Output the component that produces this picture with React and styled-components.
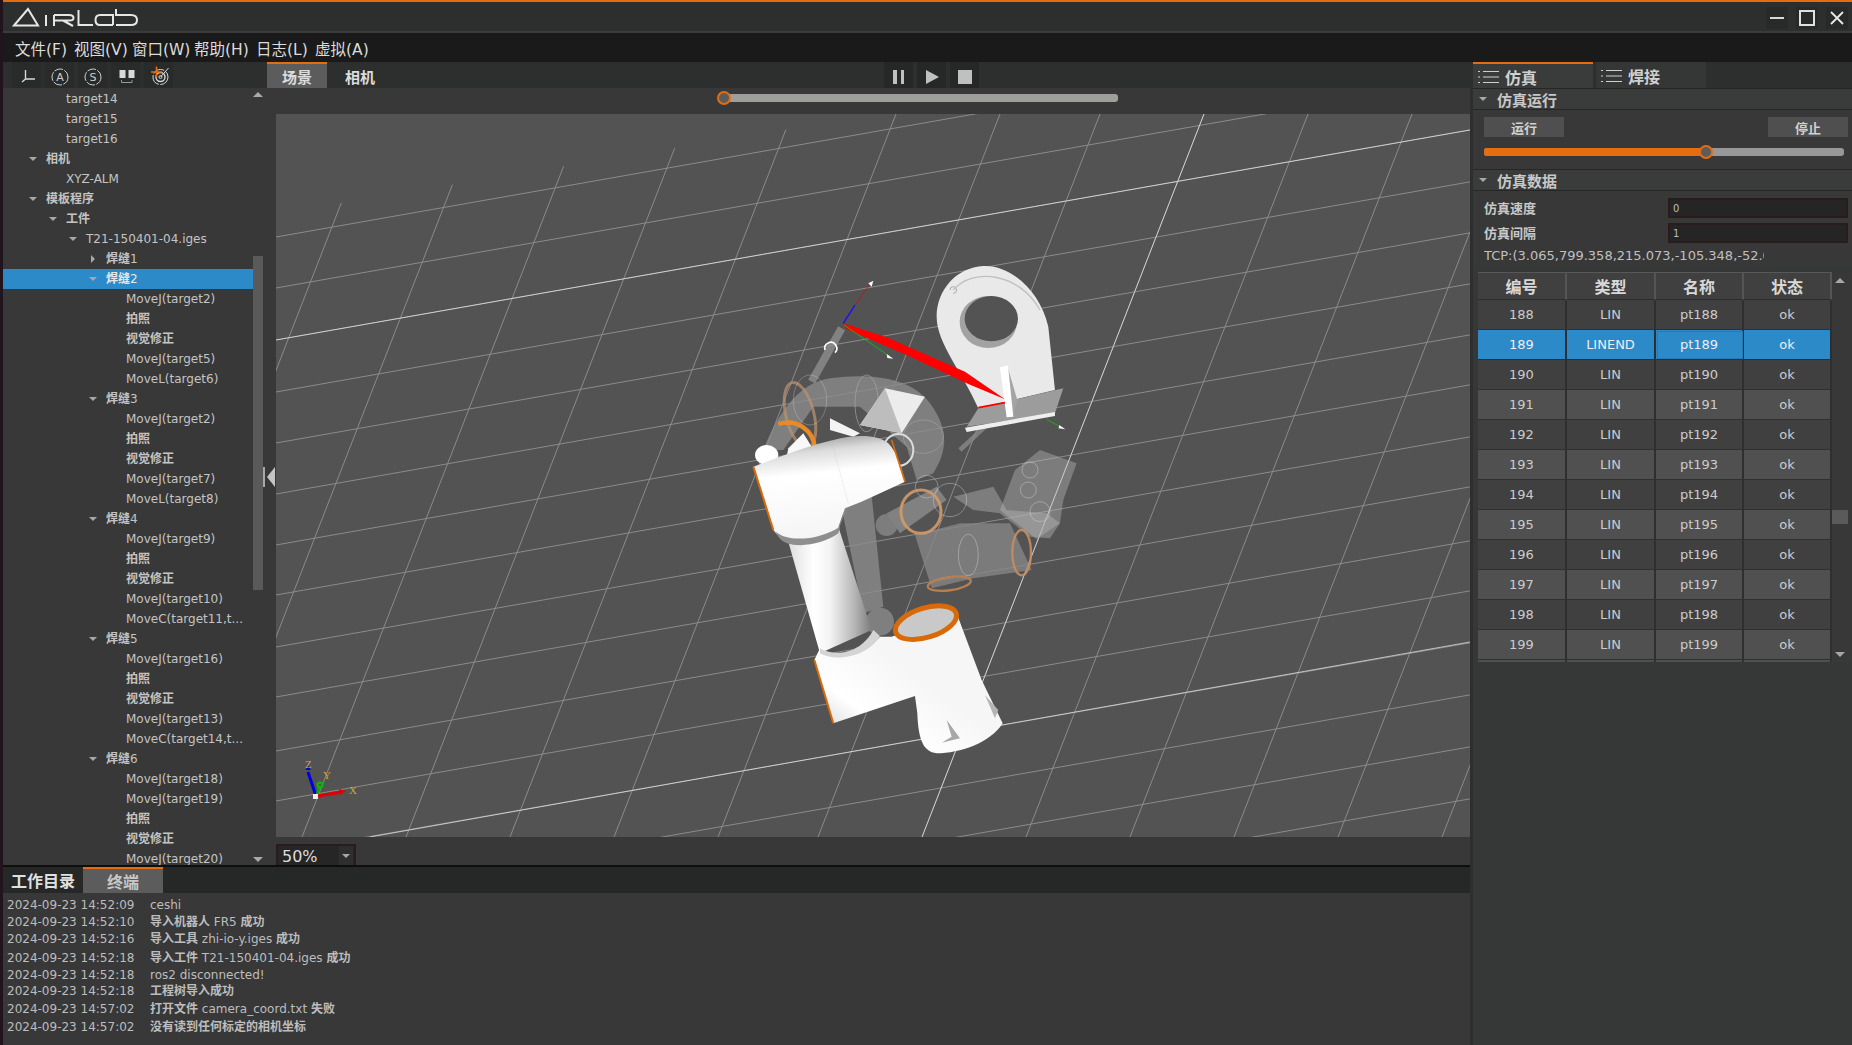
import React from 'react';
import styled, { createGlobalStyle } from 'styled-components';

const FONT = `"DejaVu Sans", "Noto Sans CJK SC", sans-serif`;

const Global = createGlobalStyle`
  html, body { margin: 0; height: 100%; overflow: hidden; background: #21141c; }
  body { font-family: ${FONT}; color: #c8c8c8; }
  * { box-sizing: border-box; }
`;

const App_ = styled.div`
  width: 1849px;
  height: 1045px;
  margin-left: 3px;
  display: flex;
  flex-direction: column;
  background: #383838;
  overflow: hidden;
`;

const TitleBar = styled.div`
  height: 33px;
  flex: none;
  border-top: 2px solid #e36d0f;
  border-bottom: 2px solid #3a3b3b;
  background: #2d2f2f;
  display: flex;
  align-items: center;
  justify-content: space-between;
`;

const WinButtons = styled.div`
  display: flex;
  gap: 8px;
  padding-right: 4px;
  margin-top: 3px;
`;

const WinButton = styled.div`
  width: 22px;
  height: 22px;
  background: #282a2a;
  display: flex;
  align-items: center;
  justify-content: center;
`;

const MenuBar = styled.div`
  height: 29px;
  flex: none;
  background: #1a1a1a;
  display: flex;
  align-items: center;
  padding-left: 12px;
  font-size: 15.5px;
  color: #dcdcdc;
`;

const MenuItem = styled.div`
  width: ${p => p.$w}px;
  white-space: nowrap;
`;

const Workspace = styled.div`
  flex: 1;
  display: flex;
  min-height: 0;
`;

const LeftArea = styled.div`
  flex: 1;
  display: flex;
  flex-direction: column;
  min-width: 0;
`;

const Toolbar = styled.div`
  height: 26px;
  flex: none;
  background: #2d2f2f;
  display: flex;
`;

const ToolGroup = styled.div`
  width: 264px;
  padding-left: 9px;
  display: flex;
  gap: 4px;
`;

const ToolButton = styled.div`
  width: 29px;
  height: 26px;
  padding-top: 4px;
  background: #292b2b;
  display: flex;
  align-items: center;
  justify-content: center;
`;

const ViewTab = styled.div`
  width: ${p => p.$w}px;
  height: 26px;
  padding-top: ${p => (p.$active ? 0 : 2)}px;
  border-top: ${p => (p.$active ? '2px solid #e36d0f' : 'none')};
  background: ${p => (p.$active ? '#5c5c5c' : 'transparent')};
  display: flex;
  align-items: center;
  justify-content: center;
  font-size: 15px;
  font-weight: 700;
  color: #dcdcdc;
`;

const PlayGroup = styled.div`
  margin-left: 491px;
  display: flex;
  gap: 4px;
`;

const PlayButton = styled(ToolButton)`
  background: #262828;
`;

const MidRow = styled.div`
  flex: 1;
  display: flex;
  min-height: 0;
`;

const TreePanel = styled.div`
  width: 267px;
  flex: none;
  display: flex;
  position: relative;
  z-index: 1;
`;

const TreeList = styled.div`
  width: 250px;
  flex: none;
  padding-top: 1px;
  font-size: 12px;
  line-height: 14px;
  height: 777px;
  overflow: hidden;
`;

const TreeRow = styled.div`
  height: 20px;
  display: flex;
  align-items: center;
  padding-left: ${p => 3 + p.$d * 20}px;
  background: ${p => (p.$sel ? '#2d8ac9' : 'transparent')};
  color: ${p => (p.$sel ? '#e8e8e8' : '#c4c4c4')};
  white-space: nowrap;
`;

const ArrowSlot = styled.span`
  width: 20px;
  flex: none;
  display: flex;
  padding-left: 3px;
`;

const Tri = styled.span`
  display: block;
  width: 0;
  height: 0;
  ${p => p.$dir === 'down' && `border-left:${p.$s || 4}px solid transparent;border-right:${p.$s || 4}px solid transparent;border-top:${p.$s || 4}px solid #a8a8a8;`}
  ${p => p.$dir === 'up' && `border-left:${p.$s || 4}px solid transparent;border-right:${p.$s || 4}px solid transparent;border-bottom:${p.$s || 4}px solid #a8a8a8;`}
  ${p => p.$dir === 'right' && `border-top:4px solid transparent;border-bottom:4px solid transparent;border-left:4px solid #a8a8a8;margin-left:2px;`}
`;

const TreeScroll = styled.div`
  width: 10px;
  flex: none;
  display: flex;
  flex-direction: column;
  align-items: center;
  justify-content: space-between;
  position: relative;
  padding: 4px 0 3px;
`;

const TreeThumb = styled.div`
  position: absolute;
  top: 168px;
  left: 0;
  width: 10px;
  height: 334px;
  background: #5a5a5a;
`;

const SplitArrow = styled.span`
  position: absolute;
  left: 264px;
  top: 379px;
  width: 0;
  height: 0;
  border-top: 10px solid transparent;
  border-bottom: 10px solid transparent;
  border-right: 8px solid #c4c4c4;
`;

const SplitBar = styled.span`
  position: absolute;
  left: 260px;
  top: 379px;
  width: 2px;
  height: 20px;
  background: #a8a8a8;
`;

const Center = styled.div`
  flex: 1;
  min-width: 0;
  display: flex;
  flex-direction: column;
  padding-left: 6px;
`;

const SliderRow = styled.div`
  height: 26px;
  flex: none;
  padding: 6px 0 0 448px;
`;

const SliderTrack = styled.div`
  position: relative;
  width: ${p => p.$w}px;
  height: 8px;
  border-radius: 3px;
  background: ${p => p.$bg || '#a09e9b'};
`;

const SliderFill = styled.div`
  height: 8px;
  border-radius: 3px;
  background: #e36d0f;
`;

const SliderHandle = styled.div`
  position: absolute;
  top: -3px;
  width: 14px;
  height: 14px;
  margin-left: -7px;
  border-radius: 50%;
  border: 2px solid #e36d0f;
  background: #5c5c5c;
`;

const Viewport = styled.div`
  height: 723px;
  flex: none;
  background: #535353;
  overflow: hidden;
`;

const SceneSvg = styled.svg`
  display: block;
  width: 1194px;
  height: 723px;
`;

const ZoomRow = styled.div`
  flex: 1;
  padding-top: 7px;
`;

const Combo = styled.div`
  width: 80px;
  height: 22px;
  border: 2px solid #2a1c1c;
  border-bottom: none;
  background: #262626;
  display: flex;
  align-items: center;
  justify-content: space-between;
  padding-left: 4px;
  font-size: 16px;
  color: #dcdcdc;
`;

const ComboDrop = styled.span`
  width: 14px;
  height: 20px;
  margin-right: 1px;
  background: #2e2e2e;
  display: flex;
  align-items: center;
  justify-content: center;
`;

const Dock = styled.div`
  height: 180px;
  flex: none;
  display: flex;
  flex-direction: column;
  border-top: 2px solid #0e0e0e;
`;

const DockTabs = styled.div`
  height: 26px;
  flex: none;
  background: #262727;
  display: flex;
`;

const DockTab = styled.div`
  width: 80px;
  border-top: ${p => (p.$active ? '2px solid #e36d0f' : 'none')};
  background: ${p => (p.$active ? '#5c5c5c' : 'transparent')};
  color: ${p => (p.$active ? '#c8c8c8' : '#e0e0e0')};
  display: flex;
  align-items: center;
  justify-content: center;
  font-size: 16px;
  font-weight: 700;
`;

const LogList = styled.div`
  padding-top: 3px;
  font-size: 12px;
  line-height: 14px;
  color: #bdbdbd;
`;

const LogRow = styled.div`
  height: ${p => p.$h}px;
  display: flex;
  align-items: center;
  padding-left: 4px;
  white-space: nowrap;
`;

const LogTime = styled.span`
  width: 143px;
  flex: none;
`;

const Zh = styled.span`
  font-weight: 700;
`;

const RightPanel = styled.div`
  width: 382px;
  flex: none;
  border-left: 3px solid #2d2f2f;
  background: #363838;
  display: flex;
  flex-direction: column;
`;

const SideTabs = styled.div`
  height: 26px;
  flex: none;
  background: #2d2f2f;
  display: flex;
  gap: 3px;
`;

const SideTab = styled.div`
  width: ${p => p.$w}px;
  padding-top: 2px;
  border-top: ${p => (p.$active ? '2px solid #e36d0f' : 'none')};
  background: ${p => (p.$active ? '#3a3c3c' : '#353737')};
  display: flex;
  align-items: center;
  padding-left: 5px;
  gap: 5px;
  font-size: 16px;
  font-weight: 700;
  color: #d0d0d0;
`;

const SectionHead = styled.div`
  height: 22px;
  flex: none;
  border-top: 1px solid #262626;
  border-bottom: 1px solid #262626;
  background: #3a3b3b;
  display: flex;
  align-items: center;
  gap: 10px;
  padding-left: 6px;
  font-size: 15px;
  font-weight: 700;
  color: #c8c8c8;
`;

const RunBox = styled.div`
  height: 59px;
  flex: none;
  padding: 7px 4px 0 11px;
  background: #383838;
`;

const RunButtons = styled.div`
  display: flex;
  justify-content: space-between;
  margin-bottom: 11px;
`;

const RunButton = styled.div`
  width: 80px;
  height: 20px;
  background: #4f4f4f;
  display: flex;
  align-items: center;
  justify-content: center;
  font-size: 13px;
  font-weight: 700;
  color: #d0d0d0;
`;

const DataBox = styled.div`
  background: #383838;
  padding: 7px 4px 0 11px;
`;

const FieldRow = styled.div`
  height: 20px;
  margin-bottom: 5px;
  display: flex;
  align-items: center;
  justify-content: space-between;
  font-size: 13px;
  line-height: 17px;
  font-weight: 700;
  color: #c8c8c8;
`;

const FieldInput = styled.div`
  width: 180px;
  height: 20px;
  border: 2px solid #2a1c1c;
  background: #252525;
  padding-left: 3px;
  font-size: 10px;
  font-weight: 400;
  line-height: 17px;
  color: #bbb;
`;

const TcpLine = styled.div`
  width: 280px;
  height: 18px;
  margin-top: -1px;
  line-height: 18px;
  overflow: hidden;
  white-space: nowrap;
  font-size: 13px;
  color: #c0c0c0;
`;

const TableWrap = styled.div`
  display: flex;
  margin: 7px 0 0 5px;
  background: #383838;
`;

const Table = styled.div`
  width: 354px;
  flex: none;
  display: grid;
  grid-template-columns: 89px 89px 88px 88px;
`;

const HeadCell = styled.div`
  height: 28px;
  border-top: 1px solid #585858;
  border-right: 2px solid #555;
  border-bottom: 1px solid #2d2d2d;
  background: #404040;
  display: flex;
  align-items: center;
  justify-content: center;
  font-size: 16px;
  font-weight: 700;
  color: #d8d8d8;
`;

const Cell = styled.div`
  height: 30px;
  border-right: 2px solid #2f2f2f;
  border-bottom: 1px solid #2f2f2f;
  background: ${p => (p.$sel ? '#2d8ac9' : p.$odd ? '#505050' : '#404040')};
  outline: ${p => (p.$focus ? '1px solid #2a79b0' : 'none')};
  outline-offset: -2px;
  display: flex;
  align-items: center;
  justify-content: center;
  font-size: 13px;
  color: ${p => (p.$sel ? '#eeeeee' : '#cccccc')};
`;

const StubCell = styled.div`
  height: 2px;
  border-right: 2px solid #2f2f2f;
  background: #505050;
`;

const TableScroll = styled.div`
  width: 16px;
  flex: none;
  position: relative;
  display: flex;
  flex-direction: column;
  align-items: center;
  justify-content: space-between;
  padding: 6px 0 5px;
`;

const TableThumb = styled.div`
  position: absolute;
  top: 238px;
  left: 0;
  width: 16px;
  height: 14px;
  background: #5a5a5a;
`;

const Spacer = styled.div`
  flex: 1;
`;

const CJK = /([\u4e00-\u9fff]+)/;
const mix = text =>
  text.split(CJK).map((part, i) => (CJK.test(part) ? <Zh key={i}>{part}</Zh> : part));

const leaf = (d, t) => ({ d, t });
const weld = (t, children, open = true, sel = false) => [
  { d: 4, t, arrow: open ? 'down' : 'right', sel },
  ...children.map(c => leaf(5, c)),
];

const treeRows = [
  leaf(2, 'target14'),
  leaf(2, 'target15'),
  leaf(2, 'target16'),
  { d: 1, t: '相机', arrow: 'down' },
  leaf(2, 'XYZ-ALM'),
  { d: 1, t: '模板程序', arrow: 'down' },
  { d: 2, t: '工件', arrow: 'down' },
  { d: 3, t: 'T21-150401-04.iges', arrow: 'down' },
  ...weld('焊缝1', [], false),
  ...weld('焊缝2', ['MoveJ(target2)', '拍照', '视觉修正', 'MoveJ(target5)', 'MoveL(target6)'], true, true),
  ...weld('焊缝3', ['MoveJ(target2)', '拍照', '视觉修正', 'MoveJ(target7)', 'MoveL(target8)']),
  ...weld('焊缝4', ['MoveJ(target9)', '拍照', '视觉修正', 'MoveJ(target10)', 'MoveC(target11,t...']),
  ...weld('焊缝5', ['MoveJ(target16)', '拍照', '视觉修正', 'MoveJ(target13)', 'MoveC(target14,t...']),
  ...weld('焊缝6', ['MoveJ(target18)', 'MoveJ(target19)', '拍照', '视觉修正', 'MoveJ(target20)']),
];

const logRows = [
  ['2024-09-23 14:52:09', 'ceshi', 17],
  ['2024-09-23 14:52:10', '导入机器人 FR5 成功', 17],
  ['2024-09-23 14:52:16', '导入工具 zhi-io-y.iges 成功', 18],
  ['2024-09-23 14:52:18', '导入工件 T21-150401-04.iges 成功', 19],
  ['2024-09-23 14:52:18', 'ros2 disconnected!', 15],
  ['2024-09-23 14:52:18', '工程树导入成功', 18],
  ['2024-09-23 14:57:02', '打开文件 camera_coord.txt 失败', 18],
  ['2024-09-23 14:57:02', '没有读到任何标定的相机坐标', 18],
];

const pointRows = Array.from({ length: 12 }, (_, i) => 188 + i);

function Logo() {
  return (
    <svg width="140" height="29" viewBox="3 2 140 29" style={{ display: 'block' }} fill="none" stroke="#e6e6e6" strokeWidth="2">
      <path d="M14 25.5 L28 9 L38 25.5 Z" />
      <path d="M46 15 V26" />
      <path d="M54 15 H69 Q73.5 15 73.5 18 Q73.5 20.5 69 20.5 H55 M54 15 V26 M63 20.5 L73 26" />
      <path d="M78.5 10 V25 H93" />
      <path d="M113 25 H100 Q95.5 25 95.5 20 Q95.5 15 100 15 H113 V25" />
      <path d="M116 9 V15 H131 Q137 15 137 20 Q137 25 131 25 H116" />
    </svg>
  );
}

function ListIcon() {
  return (
    <svg width="22" height="14" viewBox="0 0 22 14" stroke="#cfcfcf" fill="none">
      <path d="M5 1.5 H21 M5 7 H21 M5 12.5 H21" strokeWidth="1.2" />
      <path d="M0 1.5 H2 M0 7 H2 M0 12.5 H2" strokeWidth="1.2" />
    </svg>
  );
}

function DashedDisc({ letter }) {
  return (
    <svg width="20" height="20" viewBox="0 0 20 20" fill="none" stroke="#cfcfcf">
      <circle cx="10" cy="10" r="8" strokeDasharray="9 1.5" />
      <text x="10" y="14" textAnchor="middle" fontSize="11" fill="#cfcfcf" stroke="none" fontFamily="DejaVu Sans">{letter}</text>
    </svg>
  );
}

const gridA = [237, 288, 340, 392, 443, 494, 545, 595, 647, 697, 751, 801, 853, 905, 957, 1009, 1061];
const gridB = [376, 480, 584, 688, 792, 896, 1000, 1100, 1204, 1308, 1412, 1516, 1620, 1724];

function Scene() {
  return (
    <SceneSvg viewBox="276 114 1194 723">
      <defs>
        <linearGradient id="neck" x1="0" y1="0" x2="1" y2="0">
          <stop offset="0" stopColor="#dedede" />
          <stop offset=".3" stopColor="#ffffff" />
          <stop offset=".5" stopColor="#f4f4f4" />
          <stop offset=".8" stopColor="#b4b4b4" />
          <stop offset="1" stopColor="#7c7c7c" />
        </linearGradient>
        <linearGradient id="upper" x1=".35" y1="0" x2=".5" y2="1">
          <stop offset="0" stopColor="#9a9a9a" />
          <stop offset=".15" stopColor="#dcdcdc" />
          <stop offset=".35" stopColor="#ffffff" />
          <stop offset="1" stopColor="#f4f4f4" />
        </linearGradient>
        <linearGradient id="base" gradientUnits="userSpaceOnUse" x1="300" y1="720" x2="460" y2="500">
          <stop offset="0" stopColor="#e0e0e0" />
          <stop offset=".35" stopColor="#ffffff" />
          <stop offset="1" stopColor="#f6f6f6" />
        </linearGradient>
      </defs>

      <g stroke="#d8d8d8" strokeWidth="1" opacity=".42">
        {gridA.map(y => (
          <line key={y} x1={276} y1={y} x2={1470} y2={y - 0.176 * 1194} />
        ))}
        {gridB.map(x => {
          const top = x < 800 ? 201 - 0.176 * (x - 0.39 * (201 - 114) - 342) + 2 : 114;
          return <line key={x} x1={x - 0.39 * (top - 114)} y1={top} x2={x - 0.39 * 723} y2={837} />;
        })}
      </g>
      <g stroke="#ffffff" strokeWidth="1" opacity=".6">
        <line x1="276" y1="340" x2="1470" y2="130" />
        <line x1="370" y1="837" x2="1470" y2="642" />
        <line x1="1204" y1="114" x2="922" y2="837" />
      </g>

      {/* ghost robot and bracket, upper half */}
      <g transform="translate(720 260) scale(.3333)">
        <g opacity=".78">
          <path d="M130 570 C170 470 230 370 330 355 C450 340 570 350 630 430 C680 500 690 560 640 640 L590 660 L560 560 L420 440 L280 440 L190 570 Z" fill="#8c8c8c" />
          <line x1="275" y1="365" x2="365" y2="205" stroke="#909090" strokeWidth="24" />
          <line x1="720" y1="570" x2="860" y2="440" stroke="#8a8a8a" strokeWidth="14" />
        </g>
        <path d="M315 270 A18 18 0 1 1 345 278" fill="none" stroke="#fff" strokeWidth="5" />
        <ellipse cx="240" cy="465" rx="42" ry="100" transform="rotate(-14 240 465)" fill="none" stroke="#b98f6c" strokeWidth="9" opacity=".75" />
        <ellipse cx="270" cy="420" rx="50" ry="75" fill="none" stroke="#e4e4e4" strokeWidth="1.5" opacity=".55" />
        <ellipse cx="440" cy="430" rx="35" ry="85" fill="none" stroke="#a8a8a8" strokeWidth="2" />
        <ellipse cx="610" cy="530" rx="60" ry="50" fill="none" stroke="#a0a0a0" strokeWidth="2" />
        <polygon points="495,385 615,410 545,520 420,495" fill="#ececec" />
        <polygon points="495,385 545,520 420,495" fill="#bdbdbd" />
        <polygon points="330,475 420,520 400,530 330,510" fill="#f4f4f4" />
        <path d="M175 492 C230 475 280 510 285 565" fill="none" stroke="#e88a26" strokeWidth="13" />
        <ellipse cx="140" cy="585" rx="35" ry="30" fill="#fff" />
        <polygon points="205,565 250,520 275,560 200,590" fill="#f8f8f8" />
        <ellipse cx="535" cy="570" rx="45" ry="48" fill="none" stroke="#dcdcdc" strokeWidth="6" />

        <path d="M650 170 C650 90 710 22 790 18 C870 14 960 90 985 200 L1005 390 L775 445 C730 340 650 250 650 170 Z" fill="#e9e9e9" />
        <path d="M690 90 A10 10 0 1 1 700 100" fill="none" stroke="#aaa" strokeWidth="3" />
        <path d="M700 90 C760 20 900 40 960 150" fill="none" stroke="#c0c0c0" strokeWidth="4" />
        <ellipse cx="805" cy="186" rx="86" ry="78" fill="#a2a2a2" />
        <ellipse cx="814" cy="176" rx="80" ry="68" fill="#535353" />
        <polygon points="775,445 1030,385 1005,460 740,500" fill="#9c9c9c" />
        <polygon points="735,503 1005,456 1005,468 740,516" fill="#eeeeee" />
        <polygon points="862,318 892,420 878,470" fill="#a4a4a4" />
        <polygon points="840,322 864,316 880,470 860,472" fill="#ffffff" />

        <polygon points="370,190 500,232 735,335 855,418 745,372 560,285 380,208" fill="#ff0000" />
        <line x1="775" y1="443" x2="855" y2="428" stroke="#ff0000" strokeWidth="5" />
        <line x1="370" y1="190" x2="405" y2="135" stroke="#1010ff" strokeWidth="4" />
        <line x1="405" y1="135" x2="455" y2="65" stroke="#e00000" strokeWidth="2" />
        <polygon points="445,70 460,62 455,80" fill="#fff" />
        <line x1="372" y1="195" x2="510" y2="290" stroke="#10c010" strokeWidth="2.5" />
        <polygon points="500,282 520,296 502,294" fill="#fff" />
        <line x1="980" y1="478" x2="1025" y2="503" stroke="#10c010" strokeWidth="2.5" />
        <polygon points="1018,495 1036,508 1016,505" fill="#fff" />
      </g>

      {/* ghost lower half */}
      <g transform="translate(720 480) scale(.3333)">
        <g opacity=".78">
          <polygon points="360,60 450,0 490,380 430,400" fill="#8c8c8c" />
          <circle cx="480" cy="425" r="42" fill="#8c8c8c" />
          <polygon points="585,165 720,130 870,130 935,270 760,295 635,325" fill="#878787" />
          <circle cx="500" cy="135" r="33" fill="#8a8a8a" />
          <polygon points="500,100 650,20 680,60 540,160" fill="#8e8e8e" />
        </g>
        <polygon points="700,50 820,20 860,90 980,100 1020,130 990,175 930,170 840,100 760,90" fill="#a8a8a8" opacity=".5" />
        <polygon points="840,90 885,-30 960,-90 1070,-50 1030,60 1020,130 950,178" fill="#bcbcbc" opacity=".4" />
        <g fill="none" stroke="#dedede" strokeWidth="2" opacity=".6">
          <circle cx="930" cy="-30" r="24" />
          <circle cx="925" cy="30" r="24" />
          <circle cx="960" cy="95" r="30" />
          <circle cx="690" cy="60" r="50" />
          <circle cx="620" cy="20" r="34" />
          <ellipse cx="745" cy="225" rx="30" ry="62" />
        </g>
        <ellipse cx="603" cy="95" rx="60" ry="65" fill="none" stroke="#d39a68" strokeWidth="9" opacity=".9" />
        <ellipse cx="905" cy="218" rx="28" ry="68" fill="none" stroke="#c88d5c" strokeWidth="7" opacity=".9" />
        <ellipse cx="688" cy="311" rx="65" ry="20" transform="rotate(-8 688 311)" fill="none" stroke="#b8804f" strokeWidth="7" />

        {/* main arm lower link and base */}
        <polygon points="205,185 355,140 455,450 300,520" fill="url(#neck)" />
        <path d="M283 540 L300 505 C340 535 430 530 480 470 L515 470 L710 400 L785 600 L848 730 C810 790 720 820 650 820 C610 815 595 780 592 700 L585 648 L340 730 Z" fill="url(#base)" />
        <path d="M300 505 C340 530 420 525 460 450 L480 468 C440 535 340 545 300 520 Z" fill="#d4d4d4" />
        <polygon points="680,720 720,775 665,788 695,770" fill="#a8a8a8" />
        <polygon points="795,645 835,690 825,715" fill="#b4b4b4" />
        <ellipse cx="618" cy="428" rx="95" ry="44" transform="rotate(-17 618 428)" fill="#c9c9c9" stroke="#d96a0a" strokeWidth="15" />
        <line x1="283" y1="540" x2="340" y2="730" stroke="#d96a0a" strokeWidth="6" />
      </g>

      {/* main arm top link */}
      <g transform="translate(720 260) scale(.3333)">
        <path d="M100 620 C180 590 270 555 340 540 C400 525 470 520 505 550 C530 575 545 620 555 665 C500 690 440 720 375 745 L355 802 C310 830 250 850 210 848 C190 840 170 825 160 810 Z" fill="url(#upper)" />
        <path d="M165 812 C200 850 300 840 360 800 L355 820 C300 860 200 870 175 830 Z" fill="#8e8e8e" />
        <line x1="100" y1="620" x2="160" y2="810" stroke="#d96a0a" strokeWidth="6" />
        <line x1="515" y1="540" x2="555" y2="665" stroke="#d96a0a" strokeWidth="5" />
        <line x1="335" y1="545" x2="385" y2="730" stroke="#bbb" strokeWidth="1.5" strokeDasharray="3 4" />
      </g>

      <g>
        <line x1="316" y1="796" x2="308" y2="772" stroke="#0000e0" strokeWidth="3" />
        <polygon points="306,770 311,770 307,764" fill="#0000e0" />
        <line x1="317" y1="795" x2="320" y2="786" stroke="#00b000" strokeWidth="2.5" />
        <circle cx="320" cy="785" r="2.5" fill="none" stroke="#00c000" strokeWidth="2" />
        <line x1="318" y1="796" x2="342" y2="792" stroke="#e00000" strokeWidth="3" />
        <polygon points="339,789 346,791 340,795" fill="#e00000" />
        <rect x="313" y="794" width="5" height="5" fill="#f0f0f0" />
        <g fontFamily="Liberation Serif" fontSize="11" fill="#cfa82a">
          <text x="305" y="768">Z</text>
          <text x="323" y="779">Y</text>
          <text x="349" y="794">X</text>
        </g>
      </g>
    </SceneSvg>
  );
}

export default function App() {
  return (
    <App_>
      <Global />
      <TitleBar>
        <Logo />
        <WinButtons>
          <WinButton>
            <svg width="16" height="16" viewBox="0 0 16 16"><rect x="1" y="7" width="14" height="2" fill="#d8d8d8" /></svg>
          </WinButton>
          <WinButton>
            <svg width="16" height="16" viewBox="0 0 16 16" fill="none"><rect x="1" y="1" width="14" height="14" stroke="#e0e0e0" strokeWidth="2" /></svg>
          </WinButton>
          <WinButton>
            <svg width="16" height="16" viewBox="0 0 16 16" fill="none"><path d="M2 2 L14 14 M14 2 L2 14" stroke="#e8e8e8" strokeWidth="1.8" /></svg>
          </WinButton>
        </WinButtons>
      </TitleBar>
      <MenuBar>
        <MenuItem $w={59}>文件(F)</MenuItem>
        <MenuItem $w={58}>视图(V)</MenuItem>
        <MenuItem $w={62}>窗口(W)</MenuItem>
        <MenuItem $w={62}>帮助(H)</MenuItem>
        <MenuItem $w={59}>日志(L)</MenuItem>
        <MenuItem $w={60}>虚拟(A)</MenuItem>
      </MenuBar>
      <Workspace>
        <LeftArea>
          <Toolbar>
            <ToolGroup>
              <ToolButton>
                <svg width="18" height="18" viewBox="0 0 18 18" fill="none" stroke="#d8d8d8" strokeWidth="1.4">
                  <path d="M7.5 2 V11 M7.5 11 L4 14 M7.5 11 H17" />
                </svg>
              </ToolButton>
              <ToolButton><DashedDisc letter="A" /></ToolButton>
              <ToolButton><DashedDisc letter="S" /></ToolButton>
              <ToolButton>
                <svg width="20" height="20" viewBox="0 0 20 20" fill="none">
                  <rect x="3.5" y="3" width="6" height="8" fill="#d8d8d8" />
                  <rect x="12.5" y="3" width="6" height="8" fill="#d8d8d8" />
                  <path d="M5.5 13 V15.5 H16 V13" stroke="#999" />
                </svg>
              </ToolButton>
              <ToolButton>
                <svg width="24" height="24" viewBox="0 0 24 24" fill="none" stroke="#d8d8d8">
                  <circle cx="13.5" cy="12" r="7.5" strokeDasharray="12 1.5" />
                  <circle cx="13.5" cy="12" r="4.5" strokeWidth="1.4" />
                  <circle cx="13.5" cy="12" r="1.5" />
                  <path d="M13.5 12 L21.5 3" />
                  <path d="M4 7 H15 M9.5 1.5 V12.5" stroke="#e36d0f" strokeWidth="1.6" />
                </svg>
              </ToolButton>
            </ToolGroup>
            <ViewTab $w={60} $active>场景</ViewTab>
            <ViewTab $w={66}>相机</ViewTab>
            <PlayGroup>
              <PlayButton>
                <svg width="14" height="14" viewBox="0 0 14 14"><rect x="1" y="0" width="4" height="14" fill="#c0c0c0" /><rect x="9" y="0" width="3" height="14" fill="#c0c0c0" /></svg>
              </PlayButton>
              <PlayButton>
                <svg width="14" height="14" viewBox="0 0 14 14"><polygon points="1,0 14,7 1,14" fill="#c0c0c0" /></svg>
              </PlayButton>
              <PlayButton>
                <svg width="14" height="14" viewBox="0 0 14 14"><rect width="14" height="14" fill="#c0c0c0" /></svg>
              </PlayButton>
            </PlayGroup>
          </Toolbar>
          <MidRow>
            <TreePanel>
              <TreeList>
                {treeRows.map((r, i) => (
                  <TreeRow key={i} $d={r.d} $sel={r.sel}>
                    <ArrowSlot>{r.arrow && <Tri $dir={r.arrow} />}</ArrowSlot>
                    <span>{mix(r.t)}</span>
                  </TreeRow>
                ))}
              </TreeList>
              <TreeScroll>
                <Tri $dir="up" $s={5} />
                <TreeThumb />
                <Tri $dir="down" $s={5} />
              </TreeScroll>
              <SplitBar />
              <SplitArrow />
            </TreePanel>
            <Center>
              <SliderRow>
                <SliderTrack $w={394}>
                  <SliderHandle style={{ left: 0 }} />
                </SliderTrack>
              </SliderRow>
              <Viewport><Scene /></Viewport>
              <ZoomRow>
                <Combo>
                  50%
                  <ComboDrop><Tri $dir="down" /></ComboDrop>
                </Combo>
              </ZoomRow>
            </Center>
          </MidRow>
          <Dock>
            <DockTabs>
              <DockTab>工作目录</DockTab>
              <DockTab $active>终端</DockTab>
            </DockTabs>
            <LogList>
              {logRows.map(([time, msg, h], i) => (
                <LogRow key={i} $h={h}>
                  <LogTime>{time}</LogTime>
                  <span>{mix(msg)}</span>
                </LogRow>
              ))}
            </LogList>
          </Dock>
        </LeftArea>
        <RightPanel>
          <SideTabs>
            <SideTab $w={120} $active><ListIcon />仿真</SideTab>
            <SideTab $w={110}><ListIcon />焊接</SideTab>
          </SideTabs>
          <SectionHead><Tri $dir="down" />仿真运行</SectionHead>
          <RunBox>
            <RunButtons>
              <RunButton>运行</RunButton>
              <RunButton>停止</RunButton>
            </RunButtons>
            <SliderTrack $w={360} $bg="#989898">
              <SliderFill style={{ width: 222 }} />
              <SliderHandle style={{ left: 222 }} />
            </SliderTrack>
          </RunBox>
          <SectionHead><Tri $dir="down" />仿真数据</SectionHead>
          <DataBox>
            <FieldRow>仿真速度<FieldInput>0</FieldInput></FieldRow>
            <FieldRow>仿真间隔<FieldInput>1</FieldInput></FieldRow>
            <TcpLine>TCP:(3.065,799.358,215.073,-105.348,-52.088</TcpLine>
          </DataBox>
          <TableWrap>
            <Table>
              {['编号', '类型', '名称', '状态'].map(h => <HeadCell key={h}>{h}</HeadCell>)}
              {pointRows.map(n => {
                const sel = n === 189;
                const odd = n % 2 === 1;
                return (
                  <React.Fragment key={n}>
                    <Cell $sel={sel} $odd={odd}>{n}</Cell>
                    <Cell $sel={sel} $odd={odd}>{sel ? 'LINEND' : 'LIN'}</Cell>
                    <Cell $sel={sel} $odd={odd} $focus={sel}>pt{n}</Cell>
                    <Cell $sel={sel} $odd={odd}>ok</Cell>
                  </React.Fragment>
                );
              })}
              <StubCell /><StubCell /><StubCell /><StubCell />
            </Table>
            <TableScroll>
              <Tri $dir="up" $s={5} />
              <TableThumb />
              <Tri $dir="down" $s={5} />
            </TableScroll>
          </TableWrap>
          <Spacer />
        </RightPanel>
      </Workspace>
    </App_>
  );
}
